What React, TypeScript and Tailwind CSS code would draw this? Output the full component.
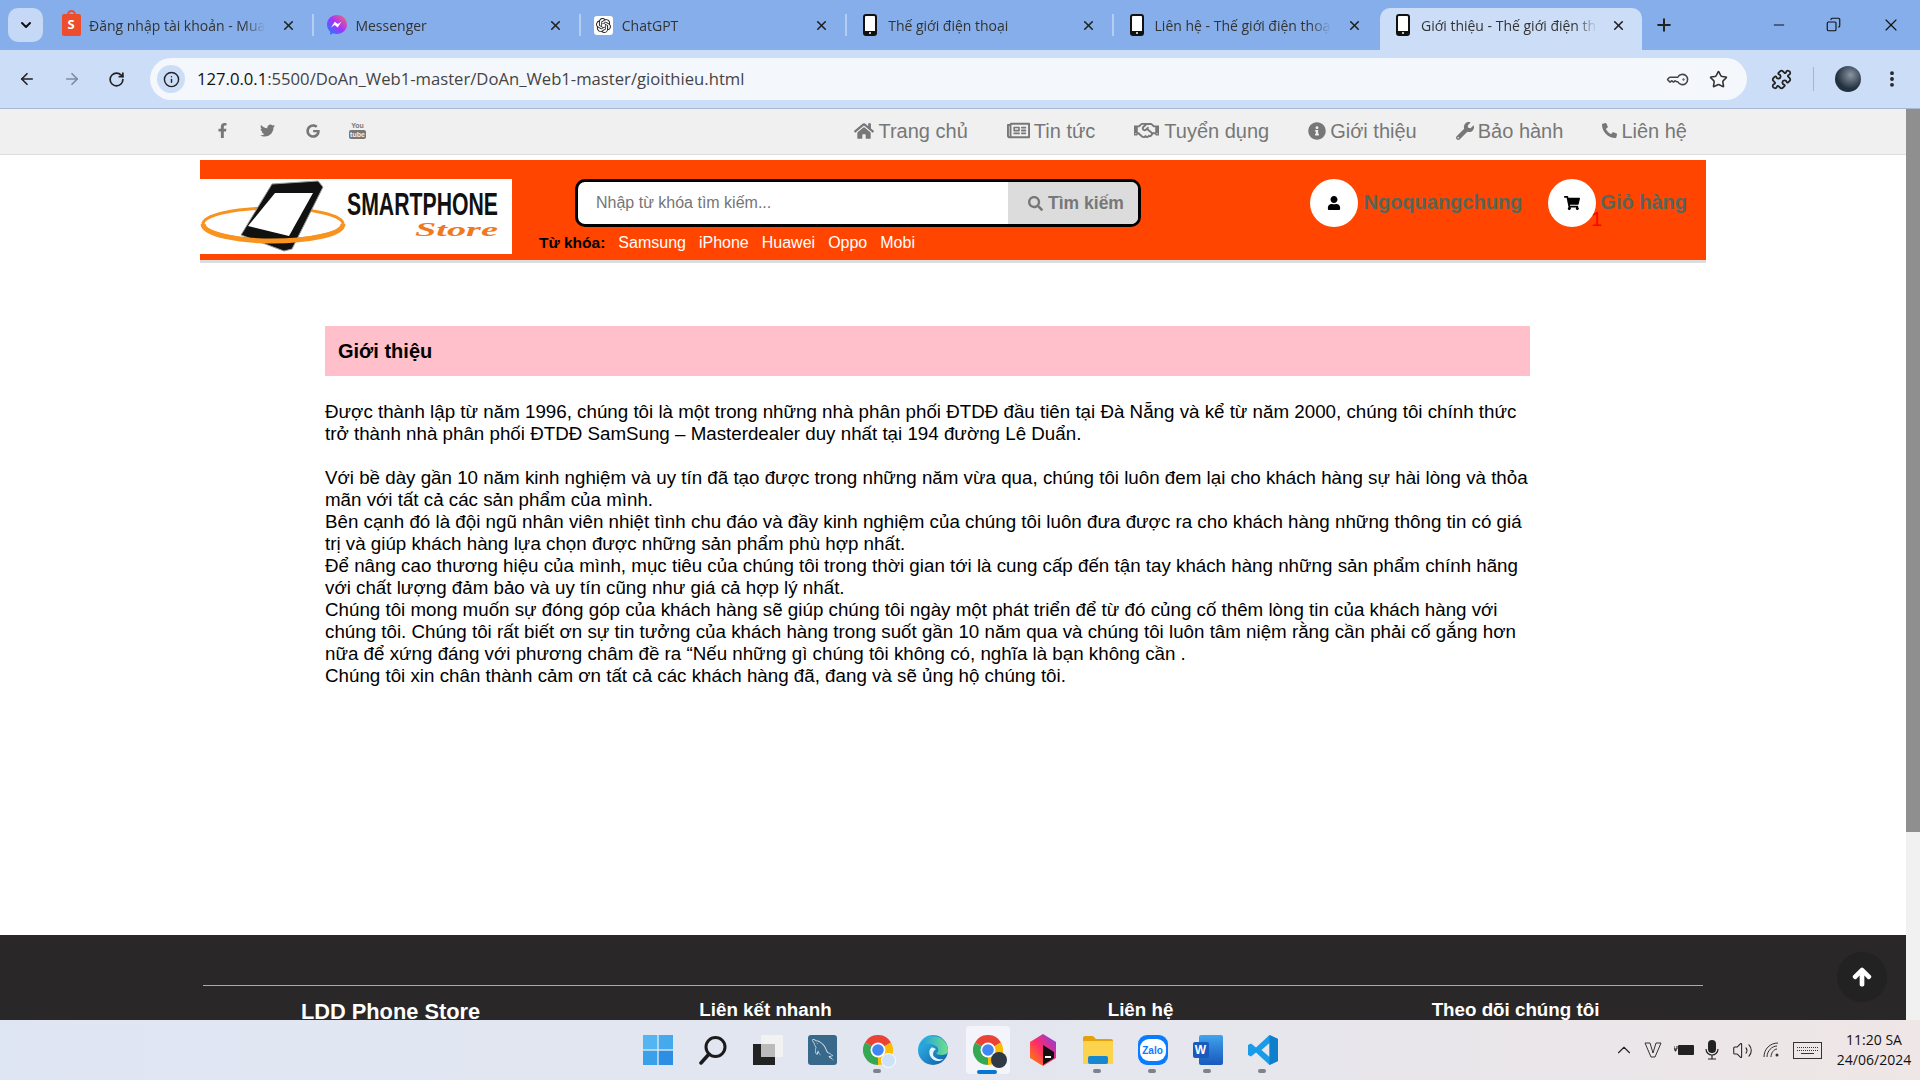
import {
  FaArrowUp,
  FaFacebookF,
  FaGoogle,
  FaHome,
  FaInfoCircle,
  FaPhoneAlt,
  FaRegHandshake,
  FaRegNewspaper,
  FaSearch,
  FaShoppingCart,
  FaTwitter,
  FaUser,
  FaWrench,
} from "react-icons/fa";
import { SiOpenai } from "react-icons/si";
import { GrMysql } from "react-icons/gr";
import {
  ArrowLeft,
  ArrowRight,
  ChevronDown,
  ChevronUp,
  Copy,
  EllipsisVertical,
  Info,
  KeyRound,
  Minus,
  Plus,
  Puzzle,
  RotateCw,
  Star,
  Volume2,
  X,
} from "lucide-react";

function PhoneIcon() {
  return (
    <svg width="14" height="22" viewBox="0 0 14 22">
      <rect x="1" y="1" width="12" height="20" rx="2" fill="#fff" stroke="#111" strokeWidth="2" />
      <rect x="1" y="17" width="12" height="4" fill="#111" />
      <circle cx="7" cy="19" r="1" fill="#fff" />
    </svg>
  );
}

function ShopeeIcon() {
  return (
    <div className="relative w-[19px] h-[22px] bg-[#ee4d2d] rounded-[2px] flex items-center justify-center text-white text-[13px] font-bold">
      S
      <div className="absolute -top-[4px] left-[5px] w-[9px] h-[7px] border-2 border-[#ee4d2d] rounded-t-full" />
    </div>
  );
}

function MessengerIcon() {
  return (
    <svg width="20" height="20" viewBox="0 0 20 20">
      <defs>
        <linearGradient id="msg" x1="0" y1="1" x2="1" y2="0">
          <stop offset="0" stopColor="#0a8cff" />
          <stop offset="0.5" stopColor="#a033ff" />
          <stop offset="1" stopColor="#ff6968" />
        </linearGradient>
      </defs>
      <path d="M10 0C4.4 0 0 4.1 0 9.6c0 2.900 1.200 5.400 3.200 7.100V20l3-1.700c1.200.4 2.400.6 3.800.6 5.600 0 10-4.100 10-9.400S15.600 0 10 0z" fill="url(#msg)" />
      <path d="M4 12.500l3.800-5.800 3 2.300 3.600-2.300-3.700 5.700-3-2.300z" fill="#fff" />
    </svg>
  );
}

function Tab({ icon, title, active, sep = true }: { icon: React.ReactNode; title: string; active?: boolean; sep?: boolean }) {
  return (
    <div
      className={`relative h-[42px] shrink-0 flex items-center pl-[13px] pb-[8px] ${
        active ? "w-[262px] pr-[16px] bg-[#cbddf7] rounded-t-[10px]" : "w-[266.4px] pr-[18px]"
      }`}
    >
      <div className="w-[20px] flex justify-center shrink-0">{icon}</div>
      <span className="ml-[8px] w-[176px] overflow-hidden whitespace-nowrap text-[14px] text-[#333] [mask-image:linear-gradient(to_right,black_88%,transparent)]">
        {title}
      </span>
      <X size={15} strokeWidth={2.6} className="ml-auto text-[#222] shrink-0" />
      {sep && <div className="absolute right-[0px] top-[6px] h-[22px] w-[2px] bg-[#b5cdf0]" />}
    </div>
  );
}

function TabBar() {
  return (
    <div className="h-[50px] bg-[#85aeea] flex items-end shrink-0">
      <div className="w-[48px] h-[50px] shrink-0 pt-[8px] pl-[8px]">
        <div className="w-[35px] h-[34px] bg-[#c5d9f6] rounded-[10px] flex items-center justify-center">
          <ChevronDown size={16} strokeWidth={3} className="text-[#111]" />
        </div>
      </div>
      <Tab icon={<ShopeeIcon />} title="Đăng nhập tài khoản - Mua sắm" />
      <Tab icon={<MessengerIcon />} title="Messenger" />
      <Tab
        icon={
          <div className="w-[19px] h-[19px] bg-white rounded-[3px] flex items-center justify-center">
            <SiOpenai size={15} className="text-[#222]" />
          </div>
        }
        title="ChatGPT"
      />
      <Tab icon={<PhoneIcon />} title="Thế giới điện thoại" />
      <Tab icon={<PhoneIcon />} title="Liên hệ - Thế giới điện thoại" sep={false} />
      <Tab icon={<PhoneIcon />} title="Giới thiệu - Thế giới điện thoại" active sep={false} />
      <div className="h-[42px] ml-[12px] pb-[8px] flex items-center">
        <Plus size={20} strokeWidth={2.4} className="text-[#222]" />
      </div>
      <div className="h-[50px] ml-auto flex items-center text-[#111] pb-[1px]">
        <Minus size={16} strokeWidth={1.8} className="mr-[39px]" />
        <Copy size={15} strokeWidth={1.8} className="mr-[40px] -scale-x-100" />
        <X size={20} strokeWidth={1.4} className="mr-[19px]" />
      </div>
    </div>
  );
}

function Toolbar() {
  return (
    <div className="h-[59px] bg-[#cbddf7] border-b border-[#a6b8d2] flex items-center shrink-0">
      <div className="w-[150px] flex items-center shrink-0 pl-[18px] gap-[27px]">
        <ArrowLeft size={18} strokeWidth={2.2} className="text-[#222]" />
        <ArrowRight size={18} strokeWidth={2.2} className="text-[#7d8a9c]" />
        <RotateCw size={17} strokeWidth={2.4} className="text-[#222]" />
      </div>
      <div className="w-[1597px] h-[42px] bg-[#f4f7fc] rounded-full flex items-center pl-[7px] pr-[19px]">
        <div className="w-[28px] h-[28px] rounded-full bg-[#cbddf7] flex items-center justify-center">
          <Info size={17} strokeWidth={2} className="text-[#222]" />
        </div>
        <span className="ml-[12px] mt-[1px] text-[16.650px] text-[#444]">
          <span className="text-[#111]">127.0.0.1</span>:5500/DoAn_Web1-master/DoAn_Web1-master/gioithieu.html
        </span>
        <KeyRound size={19} strokeWidth={2} className="ml-auto mr-[21px] text-[#444] rotate-45" />
        <Star size={19} strokeWidth={2} className="text-[#333]" />
      </div>
      <Puzzle size={21} strokeWidth={2} className="ml-[24px] text-[#222]" />
      <div className="ml-[21px] h-[24px] w-[1px] bg-[#9ab6e0]" />
      <div className="ml-[21px] w-[26px] h-[26px] rounded-full bg-[radial-gradient(circle_at_60%_35%,#8b95a3,#22303f_60%)]" />
      <EllipsisVertical size={20} strokeWidth={2.6} className="ml-[21px] text-[#222]" />
    </div>
  );
}

function YoutubeIcon() {
  return (
    <div className="flex flex-col items-center leading-none text-[#777] font-bold">
      <span className="text-[7px] leading-[8px]">You</span>
      <span className="text-[7px] leading-[9px] bg-[#777] text-[#f0f0f0] rounded-[2px] px-[1px]">tube</span>
    </div>
  );
}

function NavItem({ icon, label, gap = "ml-[4px]" }: { icon: React.ReactNode; label: string; gap?: string }) {
  return (
    <div className="flex items-center">
      {icon}
      <span className={gap}>{label}</span>
    </div>
  );
}

function TopNav() {
  return (
    <div className="h-[46px] bg-[#f0f0f0] border-b border-[#ddd] flex items-center shrink-0 pb-[2px] text-[#777] font-['Liberation_Sans',sans-serif]">
      <div className="ml-[200px] flex items-center">
        <div className="w-[45px] flex justify-center"><FaFacebookF size={15} /></div>
        <div className="w-[45px] flex justify-center"><FaTwitter size={15} /></div>
        <div className="w-[45px] flex justify-center"><FaGoogle size={14} /></div>
        <div className="w-[45px] flex justify-center"><YoutubeIcon /></div>
      </div>
      <div className="ml-auto mr-[219px] flex items-center gap-[39px] text-[20px]">
        <NavItem icon={<FaHome size={20} />} label="Trang chủ" />
        <NavItem icon={<FaRegNewspaper size={23} />} label="Tin tức" />
        <NavItem icon={<FaRegHandshake size={25} />} label="Tuyển dụng" gap="ml-[5px]" />
        <NavItem icon={<FaInfoCircle size={18} />} label="Giới thiệu" />
        <NavItem icon={<FaWrench size={18} />} label="Bảo hành" gap="ml-[4px]" />
        <NavItem icon={<FaPhoneAlt size={15} />} label="Liên hệ" />
      </div>
    </div>
  );
}

function Logo() {
  return (
    <svg width="312" height="75" viewBox="0 0 312 75" className="block bg-white">
      <ellipse cx="73" cy="45" rx="70" ry="16" fill="none" stroke="#f7931e" strokeWidth="3" />
      <polygon points="72,5 118,2 123,8 92,70 84,72 41,56" fill="#111" stroke="#999" strokeWidth="1" />
      <polygon points="75,14 113,14 89,57 48,47" fill="#fff" />
      <path d="M3 45 C4 56 40 62 73 62 C106 62 143 56 143 45" fill="none" stroke="#f7931e" strokeWidth="5" />
      <text x="147" y="36" fontFamily="Liberation Sans, sans-serif" fontWeight="700" fontSize="31" textLength="151" lengthAdjust="spacingAndGlyphs" fill="#111">
        SMARTPHONE
      </text>
      <text x="215" y="57" fontFamily="Liberation Serif, serif" fontStyle="italic" fontWeight="700" fontSize="19" textLength="83" lengthAdjust="spacingAndGlyphs" fill="#f0781e">
        Store
      </text>
    </svg>
  );
}

function Header() {
  return (
    <div className="w-[1506px] mx-auto mt-[5px] h-[103px] bg-[#ff4500] border-b-[3px] border-[#ddd] flex shrink-0 font-['Liberation_Sans',sans-serif]">
      <div className="pt-[19px]">
        <Logo />
      </div>
      <div className="ml-[27px] pt-[19px]">
        <div className="ml-[36px] w-[566px] h-[48px] border-[3px] border-black rounded-[10px] bg-white flex overflow-hidden">
          <div className="flex-1 pl-[18px] flex items-center text-[16px] text-[#757575]">Nhập từ khóa tìm kiếm...</div>
          <div className="w-[130px] pl-[6px] bg-[#dcdcdc] flex items-center justify-center gap-[5px] text-[#777] text-[17.500px] font-bold">
            <FaSearch size={15} />
            Tìm kiếm
          </div>
        </div>
        <div className="mt-[4px] flex items-center text-[16px] text-white">
          <span className="font-bold text-[15.500px] text-black mr-[13px]">Từ khóa:</span>
          <span className="mr-[13px]">Samsung</span>
          <span className="mr-[13px]">iPhone</span>
          <span className="mr-[13px]">Huawei</span>
          <span className="mr-[13px]">Oppo</span>
          <span>Mobi</span>
        </div>
      </div>
      <div className="ml-auto pr-[19px] pt-[19px] flex text-[20px] font-bold text-[#56665a]">
        <div className="w-[48px] h-[48px] rounded-full bg-white flex items-center justify-center text-black">
          <FaUser size={14} />
        </div>
        <span className="ml-[5px] leading-[46px]">Ngoquangchung</span>
        <div className="relative ml-[26px] w-[48px] h-[48px] rounded-full bg-white flex items-center justify-center text-black">
          <FaShoppingCart size={16} />
          <span className="absolute left-[43px] top-[28px] text-[20px] leading-[24px] font-normal text-[#f00]">1</span>
        </div>
        <span className="ml-[4px] leading-[46px]">Giỏ hàng</span>
      </div>
    </div>
  );
}

function Content() {
  return (
    <div className="ml-[325px] w-[1205px] mt-[63px] font-['Liberation_Sans',sans-serif] text-[18.750px] leading-[22px] text-black">
      <div className="h-[50px] bg-[#ffc0cb] pl-[13px] flex items-center text-[20px] font-bold">Giới thiệu</div>
      <div className="mt-[25px]">
        Được thành lập từ năm 1996, chúng tôi là một trong những nhà phân phối ĐTDĐ đầu tiên tại Đà Nẵng và kể từ năm 2000, chúng tôi chính thức trở thành nhà phân phối ĐTDĐ SamSung – Masterdealer duy nhất tại 194 đường Lê Duẩn.
        <br />
        <br />
        Với bề dày gần 10 năm kinh nghiệm và uy tín đã tạo được trong những năm vừa qua, chúng tôi luôn đem lại cho khách hàng sự hài lòng và thỏa mãn với tất cả các sản phẩm của mình.
        <br />
        Bên cạnh đó là đội ngũ nhân viên nhiệt tình chu đáo và đầy kinh nghiệm của chúng tôi luôn đưa được ra cho khách hàng những thông tin có giá trị và giúp khách hàng lựa chọn được những sản phẩm phù hợp nhất.
        <br />
        Để nâng cao thương hiệu của mình, mục tiêu của chúng tôi trong thời gian tới là cung cấp đến tận tay khách hàng những sản phẩm chính hãng với chất lượng đảm bảo và uy tín cũng như giá cả hợp lý nhất.
        <br />
        Chúng tôi mong muốn sự đóng góp của khách hàng sẽ giúp chúng tôi ngày một phát triển để từ đó củng cố thêm lòng tin của khách hàng với chúng tôi. Chúng tôi rất biết ơn sự tin tưởng của khách hàng trong suốt gần 10 năm qua và chúng tôi luôn tâm niệm rằng cần phải cố gắng hơn nữa để xứng đáng với phương châm đề ra “Nếu những gì chúng tôi không có, nghĩa là bạn không cần .
        <br />
        Chúng tôi xin chân thành cảm ơn tất cả các khách hàng đã, đang và sẽ ủng hộ chúng tôi.
      </div>
    </div>
  );
}

function Footer() {
  return (
    <div className="relative h-[85px] shrink-0 bg-[#292728] overflow-hidden font-['Liberation_Sans',sans-serif] text-white font-bold">
      <div className="w-[1500px] mx-auto mt-[50px] border-t border-[#aaa] grid grid-cols-4 text-center text-[18.750px] pt-[10px]">
        <div className="text-[21.800px]">LDD Phone Store</div>
        <div>Liên kết nhanh</div>
        <div>Liên hệ</div>
        <div>Theo dõi chúng tôi</div>
      </div>
      <div className="absolute left-[1837px] top-[17px] w-[50px] h-[50px] rounded-full bg-[#222] flex items-center justify-center">
        <FaArrowUp size={20} stroke="#fff" strokeWidth={40} />
      </div>
    </div>
  );
}

function Scrollbar() {
  return (
    <div className="w-[14px] shrink-0 bg-[#f1f1f1]">
      <div className="h-[723px] bg-[#8f8f8f]" />
    </div>
  );
}

function Dock({ dot, active, children }: { dot?: boolean; active?: boolean; children: React.ReactNode }) {
  return (
    <div className="relative w-[55px] h-[48px] flex items-center justify-center">
      {active && <div className="absolute left-[6px] top-0 w-[44px] h-[48px] bg-[#f3f5fa] rounded-[4px]" />}
      <div className="relative">{children}</div>
      {dot && <div className="absolute left-[23px] bottom-[1px] w-[8px] h-[4px] rounded-full bg-[#7d828b]" />}
      {active && <div className="absolute left-[17px] bottom-0 w-[20px] h-[4px] rounded-full bg-[#0078d4]" />}
    </div>
  );
}

function ChromeIcon({ badge }: { badge?: "user" | "photo" }) {
  return (
    <div className="relative w-[30px] h-[30px]">
      <svg width="30" height="30" viewBox="0 0 30 30">
        <path d="M15 15 L2 7.500 A15 15 0 0 1 28 7.500 Z" fill="#ea4335" />
        <path d="M15 15 L28 7.500 A15 15 0 0 1 15 30 Z" fill="#fbbc04" />
        <path d="M15 15 L15 30 A15 15 0 0 1 2 7.500 Z" fill="#34a853" />
        <circle cx="15" cy="15" r="7.500" fill="#fff" />
        <circle cx="15" cy="15" r="5.800" fill="#4285f4" />
      </svg>
      {badge === "user" && <div className="absolute right-[-3px] bottom-[-3px] w-[15px] h-[15px] rounded-full bg-[#cfe0fa] border border-white" />}
      {badge === "photo" && <div className="absolute right-[-4px] bottom-[-3px] w-[16px] h-[16px] rounded-full bg-[#2f3a46]" />}
    </div>
  );
}

function Taskbar() {
  return (
    <div className="h-[60px] shrink-0 flex items-center bg-gradient-to-r from-[#dfe6f3] via-[#e3e6f0] to-[#efe6e6] pt-[6px] pb-[6px]">
      <div className="w-[630px] shrink-0" />
      <div className="flex items-center shrink-0">
        <Dock>
          <svg width="30" height="30" viewBox="0 0 30 30">
            <rect width="14.300" height="14.300" fill="#53b5f2" />
            <rect x="15.700" width="14.300" height="14.300" fill="#45a9ee" />
            <rect y="15.700" width="14.300" height="14.300" fill="#39a0ea" />
            <rect x="15.700" y="15.700" width="14.300" height="14.300" fill="#2c8fe4" />
          </svg>
        </Dock>
        <Dock>
          <svg width="30" height="30" viewBox="0 0 30 30" fill="none" stroke="#1b1b1b" strokeWidth="3">
            <circle cx="17.500" cy="12" r="9.500" />
            <path d="M11 19 L3 28" strokeLinecap="round" strokeWidth="3.500" />
          </svg>
        </Dock>
        <Dock>
          <svg width="30" height="30" viewBox="0 0 30 30">
            <rect x="8" width="22" height="22" fill="#f2f2f2" />
            <rect y="9" width="22" height="21" fill="#222" />
            <rect x="8" y="9" width="14" height="13" fill="#bbb" />
          </svg>
        </Dock>
        <Dock>
          <div className="w-[29px] h-[30px] rounded-[3px] bg-[#39698a] flex items-center justify-center">
            <GrMysql size={22} className="text-[#dbe6ee]" />
          </div>
        </Dock>
        <Dock dot>
          <ChromeIcon badge="user" />
        </Dock>
        <Dock>
          <svg width="30" height="30" viewBox="0 0 30 30">
            <defs>
              <linearGradient id="edge" x1="0" y1="0" x2="1" y2="1">
                <stop offset="0" stopColor="#35c1f1" />
                <stop offset="1" stopColor="#0c59a4" />
              </linearGradient>
              <linearGradient id="edge2" x1="0" y1="0" x2="1" y2="0">
                <stop offset="0" stopColor="#1b9de2" />
                <stop offset="1" stopColor="#6fe08a" />
              </linearGradient>
            </defs>
            <circle cx="15" cy="15" r="15" fill="url(#edge)" />
            <path d="M2 11C5 2 16 -1 24 4c4 3 6 7 6 12 0 3-3 4-7 4-3 0-4-1-5-2 3-1 3-5 0-7-5-3-12-3-16 0z" fill="url(#edge2)" />
            <path d="M13 13c-3 3-2 9 3 12 3 2 7 1 10-1-5 1-11-1-11-5 0-3 2-4 3-5-2-1-4-2-5-1z" fill="#e6f5fb" />
          </svg>
        </Dock>
        <Dock active>
          <ChromeIcon badge="photo" />
        </Dock>
        <Dock>
          <svg width="26" height="32" viewBox="0 0 26 32">
            <defs>
              <linearGradient id="jb" x1="0" y1="1" x2="1" y2="0">
                <stop offset="0" stopColor="#ff8a00" />
                <stop offset="0.5" stopColor="#fd2b6b" />
                <stop offset="1" stopColor="#7b3ff2" />
              </linearGradient>
            </defs>
            <polygon points="13,0 26,8 26,24 13,32 0,24 0,8" fill="url(#jb)" />
            <polygon points="13,11 24,18 24,24 13,31" fill="#111" />
            <rect x="15" y="22" width="6" height="2" fill="#fff" />
          </svg>
        </Dock>
        <Dock dot>
          <svg width="30" height="28" viewBox="0 0 30 28">
            <path d="M0 2a2 2 0 0 1 2-2h8l3 3h15a2 2 0 0 1 2 2v3H0z" fill="#e3a10c" />
            <rect y="5" width="30" height="23" rx="1" fill="#fcd34d" />
            <rect x="5" y="20" width="20" height="8" rx="2" fill="#1787d0" />
          </svg>
        </Dock>
        <Dock dot>
          <div className="w-[30px] h-[30px] rounded-[9px] bg-[#0a7cff] flex items-center justify-center">
            <div className="w-[26px] h-[22px] rounded-[9px] bg-white text-[#0a7cff] text-[10px] font-bold font-['Liberation_Sans',sans-serif] flex items-center justify-center">
              Zalo
            </div>
          </div>
        </Dock>
        <Dock dot>
          <div className="relative w-[30px] h-[30px]">
            <div className="absolute right-0 top-0 w-[24px] h-[30px] rounded-[2px] bg-gradient-to-b from-[#41a5ee] via-[#2b7cd3] to-[#185abd]" />
            <div className="absolute left-0 top-[7px] w-[16px] h-[16px] rounded-[2px] bg-[#185abd] text-white text-[12px] font-bold flex items-center justify-center font-['Liberation_Sans',sans-serif]">
              W
            </div>
          </div>
        </Dock>
        <Dock dot>
          <svg width="30" height="30" viewBox="0 0 30 30">
            <path d="M21.500 0 30 4v22l-8.500 4L8 17.500 3 21.500 0 20v-10l3-1.500 5 4zM21.500 8 13.500 15l8 7z" fill="#1a9be8" />
            <path d="M21.500 0 30 4v22l-8.500 4z" fill="#0f7fcc" />
          </svg>
        </Dock>
      </div>
      <div className="flex-1 flex items-center justify-end pr-[8px] text-[#222]">
        <ChevronUp size={22} strokeWidth={1.2} className="mr-[9px]" />
        <svg width="18" height="18" viewBox="0 0 18 18" fill="none" stroke="#333" strokeWidth="1" className="mr-[12px]">
          <path d="M1 2h5l3 10 3-10h5l-6 14H7z" />
        </svg>
        <svg width="20" height="12" viewBox="0 0 20 12" className="mr-[11px]">
          <rect x="4" y="1" width="16" height="10" rx="1" fill="#222" />
          <path d="M0 2v3h3v-3M1 5v2h1v-2" fill="none" stroke="#222" strokeWidth="1" />
        </svg>
        <svg width="14" height="20" viewBox="0 0 14 20" className="mr-[13px]">
          <rect x="3" y="0" width="8" height="13" rx="4" fill="#222" />
          <path d="M1 9a6 6 0 0 0 12 0M7 15v4M3 19h8" fill="none" stroke="#222" strokeWidth="1.200" />
        </svg>
        <Volume2 size={21} strokeWidth={1.2} className="mr-[10px]" />
        <svg width="18" height="18" viewBox="0 0 18 18" fill="none" stroke="#333" strokeWidth="1" className="mr-[12px]">
          <circle cx="14" cy="14" r="1.500" fill="#333" stroke="none" />
          <path d="M8 16 C8 12 11 8 14 8M4 16C4 10 9 5 14 5M1 16C1 8 7 2 15 2" />
        </svg>
        <div className="w-[29px] h-[17px] border border-[#333] mr-[14px] flex flex-col justify-center gap-[2px] px-[3px]">
          <div className="h-[1px] border-t border-dotted border-[#333]" />
          <div className="h-[1px] border-t border-dotted border-[#333]" />
          <div className="h-[1px] mx-[4px] bg-[#333]" />
        </div>
        <div className="w-[76px] text-center text-[14px] leading-[20px] text-[#111] font-['Open_Sans',sans-serif] whitespace-nowrap">
          <div>11:20 SA</div>
          <div>24/06/2024</div>
        </div>
      </div>
    </div>
  );
}

export default function App() {
  return (
    <div className="w-[1920px] h-[1080px] overflow-hidden flex flex-col bg-white font-['Open_Sans',sans-serif]">
      <TabBar />
      <Toolbar />
      <div className="flex-1 min-h-0 flex">
        <div className="flex-1 min-w-0 flex flex-col">
          <TopNav />
          <Header />
          <Content />
          <div className="flex-1" />
          <Footer />
        </div>
        <Scrollbar />
      </div>
      <Taskbar />
    </div>
  );
}
